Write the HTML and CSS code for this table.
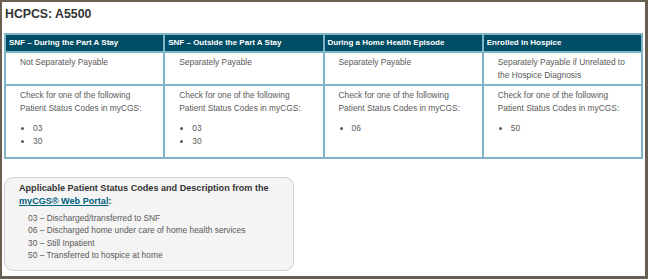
FILE: index.html
```html
<!DOCTYPE html>
<html lang="en">
<head>
<meta charset="utf-8">
<title>HCPCS: A5500</title>
<link rel="stylesheet" href="styles.css">
</head>
<body>
<div class="frame">
  <h1 class="title">HCPCS: A5500</h1>
  <table class="grid">
    <thead>
      <tr>
        <th>SNF – During the Part A Stay</th>
        <th>SNF – Outside the Part A Stay</th>
        <th>During a Home Health Episode</th>
        <th>Enrolled in Hospice</th>
      </tr>
    </thead>
    <tbody>
      <tr class="pay-row">
        <td>Not Separately Payable</td>
        <td>Separately Payable</td>
        <td>Separately Payable</td>
        <td>Separately Payable if Unrelated to the Hospice Diagnosis</td>
      </tr>
      <tr class="code-row">
        <td>
          <p>Check for one of the following Patient Status Codes in myCGS:</p>
          <ul><li>03</li><li>30</li></ul>
        </td>
        <td>
          <p>Check for one of the following Patient Status Codes in myCGS:</p>
          <ul><li>03</li><li>30</li></ul>
        </td>
        <td>
          <p>Check for one of the following Patient Status Codes in myCGS:</p>
          <ul><li>06</li></ul>
        </td>
        <td>
          <p>Check for one of the following Patient Status Codes in myCGS:</p>
          <ul><li>50</li></ul>
        </td>
      </tr>
    </tbody>
  </table>
  <div class="note">
    <p class="note-head">Applicable Patient Status Codes and Description from the <a href="#" class="note-link">myCGS® Web Portal</a>:</p>
    <ul class="note-list">
      <li>03 – Discharged/transferred to SNF</li>
      <li>06 – Discharged home under care of home health services</li>
      <li>30 – Still Inpatient</li>
      <li>50 – Transferred to hospice at home</li>
    </ul>
  </div>
</div>
</body>
</html>
```

FILE: styles.css
```css
html, body {
  margin: 0;
  padding: 0;
  background: #ffffff;
}

body {
  font-family: "Liberation Sans", Arial, sans-serif;
  color: #595959;
}

.frame {
  box-sizing: border-box;
  width: 648px;
  height: 279px;
  border-style: solid;
  border-color: #685e52;
  border-width: 2px 3px 3px 2px;
  background: #ffffff;
  overflow: hidden;
}

.title {
  margin: 5px 0 0 3px;
  font-size: 12.3px;
  line-height: 15px;
  font-weight: bold;
  color: #333333;
}

.grid {
  margin: 11px 0 0 2px;
  width: 639px;
  table-layout: fixed;
  border-collapse: separate;
  border-spacing: 2px;
  background: #80b4c8;
}

.grid th {
  background: #004d66;
  color: #ffffff;
  font-size: 8px;
  font-weight: bold;
  line-height: 12px;
  text-align: left;
  padding: 2px 3px;
  white-space: nowrap;
  overflow: hidden;
}

.grid td {
  background: #ffffff;
  vertical-align: top;
  font-size: 8.4px;
  line-height: 13px;
  color: #595959;
}

.pay-row td {
  padding: 3px 8px 2px 14px;
}

.code-row td {
  padding: 3px 8px 10px 14px;
  line-height: 12.7px;
}

.code-row p {
  margin: 0;
}

.code-row ul {
  margin: 7.5px 0 0 0;
  padding-left: 13px;
  list-style: disc;
}

.note {
  box-sizing: border-box;
  margin: 18px 0 0 2px;
  width: 290px;
  border: 1px solid #d2d2d2;
  border-radius: 9px;
  background: #f4f4f4;
  padding: 4px 10px 8px 14px;
}

.note-head {
  margin: 0;
  font-size: 9.1px;
  line-height: 13px;
  font-weight: bold;
  color: #333333;
}

.note-link {
  color: #00607f;
  text-decoration: underline;
}

.note-list {
  margin: 3.5px 0 0 0;
  padding-left: 9px;
  list-style: none;
  font-size: 8.4px;
  line-height: 12.5px;
  color: #595959;
}
```
